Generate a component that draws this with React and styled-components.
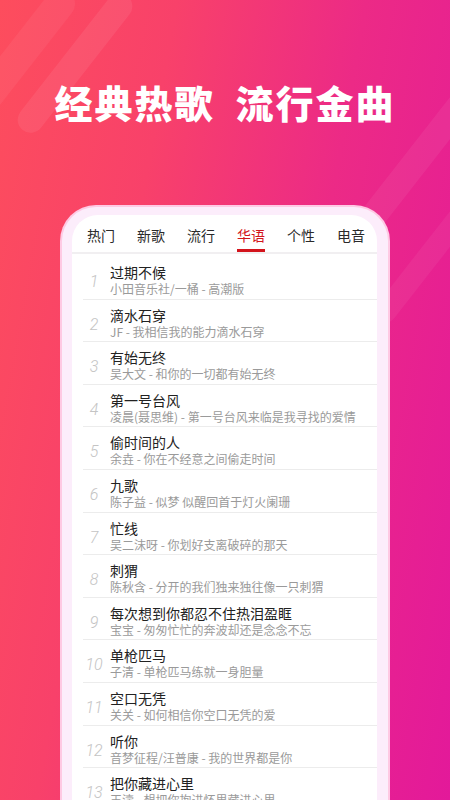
import React from "react";
import styled, { createGlobalStyle } from "styled-components";

const Global = createGlobalStyle`
  html, body { margin: 0; padding: 0; }
  body { font-family: "Noto Sans CJK SC", "Noto Sans", sans-serif; }
`;

const Page = styled.div`
  position: relative;
  width: 450px;
  height: 800px;
  overflow: hidden;
  background: linear-gradient(100deg, #fd4d5d 0%, #f8416a 30%, #ec2a86 62%, #e3199a 100%);
  display: flex;
  flex-direction: column;
  align-items: center;
`;

const Stripe = styled.div`
  position: absolute;
  width: ${(p) => p.$w}px;
  height: ${(p) => p.$h}px;
  left: ${(p) => p.$x}px;
  top: ${(p) => p.$y}px;
  border-radius: ${(p) => p.$h / 2}px;
  background: rgba(255, 255, 255, ${(p) => p.$a});
  transform: rotate(-52deg);
  transform-origin: center;
  pointer-events: none;
`;

const Headline = styled.h1`
  position: relative;
  margin: 80px 0 0;
  height: 44px;
  line-height: 44px;
  display: flex;
  gap: 21px;
  color: #fff;
  font-family: "Noto Sans CJK SC", sans-serif;
  font-weight: 900;
  font-size: 38px;
  letter-spacing: 2px;
  white-space: nowrap;
`;

const Frame = styled.div`
  position: relative;
  margin-top: 81px;
  width: 330px;
  box-sizing: border-box;
  flex: 1;
  border: 2px solid rgba(255, 190, 220, 0.75);
  border-bottom: none;
  border-radius: 36px 36px 0 0;
  background: #fcedfb;
  padding: 8px 11px 0 10px;
  display: flex;
`;

const Screen = styled.div`
  flex: 1;
  background: #fff;
  border-radius: 26px 26px 0 0;
  display: flex;
  flex-direction: column;
  overflow: hidden;
`;

const Tabs = styled.div`
  display: flex;
  padding: 0 0 0 4px;
  border-bottom: 2px solid #f1eff1;
`;

const Tab = styled.div`
  width: 50px;
  padding-top: 10px;
  display: flex;
  flex-direction: column;
  align-items: center;
  font-size: 14px;
  line-height: 20px;
  color: ${(p) => (p.$active ? "#d3141c" : "#2a2a2a")};
  &::after {
    content: "";
    margin-top: 4px;
    width: 28px;
    height: 3px;
    background: ${(p) => (p.$active ? "#d3141c" : "transparent")};
  }
`;

const List = styled.div`
  padding-top: 3px;
  display: flex;
  flex-direction: column;
`;

const Row = styled.div`
  box-sizing: border-box;
  height: 42.6px;
  flex-shrink: 0;
  margin-left: 11px;
  border-bottom: 1px solid #ececec;
  display: flex;
  align-items: flex-start;
`;

const Num = styled.div`
  width: 22px;
  margin-top: 15px;
  text-align: center;
  font-family: "Roboto", "Liberation Sans", sans-serif;
  font-weight: 300;
  font-style: italic;
  font-size: 16px;
  line-height: 20px;
  color: #c4c4c4;
`;

const Texts = styled.div`
  margin-left: 5px;
  padding-top: 6px;
  display: flex;
  flex-direction: column;
`;

const Title = styled.div`
  font-size: 14px;
  line-height: 18px;
  color: #222;
  white-space: nowrap;
`;

const Sub = styled.div`
  font-size: 12px;
  line-height: 16px;
  color: #9a9a9a;
  white-space: nowrap;
`;

const tabs = ["热门", "新歌", "流行", "华语", "个性", "电音"];

const songs = [
  ["过期不候", "小田音乐社/一桶 - 高潮版"],
  ["滴水石穿", "JF - 我相信我的能力滴水石穿"],
  ["有始无终", "吴大文 - 和你的一切都有始无终"],
  ["第一号台风", "凌晨(聂思维) - 第一号台风来临是我寻找的爱情"],
  ["偷时间的人", "余垚 - 你在不经意之间偷走时间"],
  ["九歌", "陈子益 - 似梦 似醒回首于灯火阑珊"],
  ["忙线", "吴二沫呀 - 你划好支离破碎的那天"],
  ["刺猬", "陈秋含 - 分开的我们独来独往像一只刺猬"],
  ["每次想到你都忍不住热泪盈眶", "宝宝 - 匆匆忙忙的奔波却还是念念不忘"],
  ["单枪匹马", "子清 - 单枪匹马练就一身胆量"],
  ["空口无凭", "关关 - 如何相信你空口无凭的爱"],
  ["听你", "音梦征程/汪普康 - 我的世界都是你"],
  ["把你藏进心里", "王濤 - 想把你抱进怀里藏进心里"],
];

export default function App() {
  return (
    <>
      <Global />
      <Page>
        <Stripe $x={-10} $y={50} $w={170} $h={26} $a={0.07} />
        <Stripe $x={-60} $y={40} $w={160} $h={30} $a={0.05} />
        <Stripe $x={330} $y={150} $w={170} $h={26} $a={0.06} />
        <Stripe $x={350} $y={250} $w={150} $h={22} $a={0.05} />
        <Headline>
          <span>经典热歌</span>
          <span>流行金曲</span>
        </Headline>
        <Frame>
          <Screen>
            <Tabs>
              {tabs.map((t) => (
                <Tab key={t} $active={t === "华语"}>
                  {t}
                </Tab>
              ))}
            </Tabs>
            <List>
              {songs.map(([title, sub], i) => (
                <Row key={title}>
                  <Num>{i + 1}</Num>
                  <Texts>
                    <Title>{title}</Title>
                    <Sub>{sub}</Sub>
                  </Texts>
                </Row>
              ))}
            </List>
          </Screen>
        </Frame>
      </Page>
    </>
  );
}
